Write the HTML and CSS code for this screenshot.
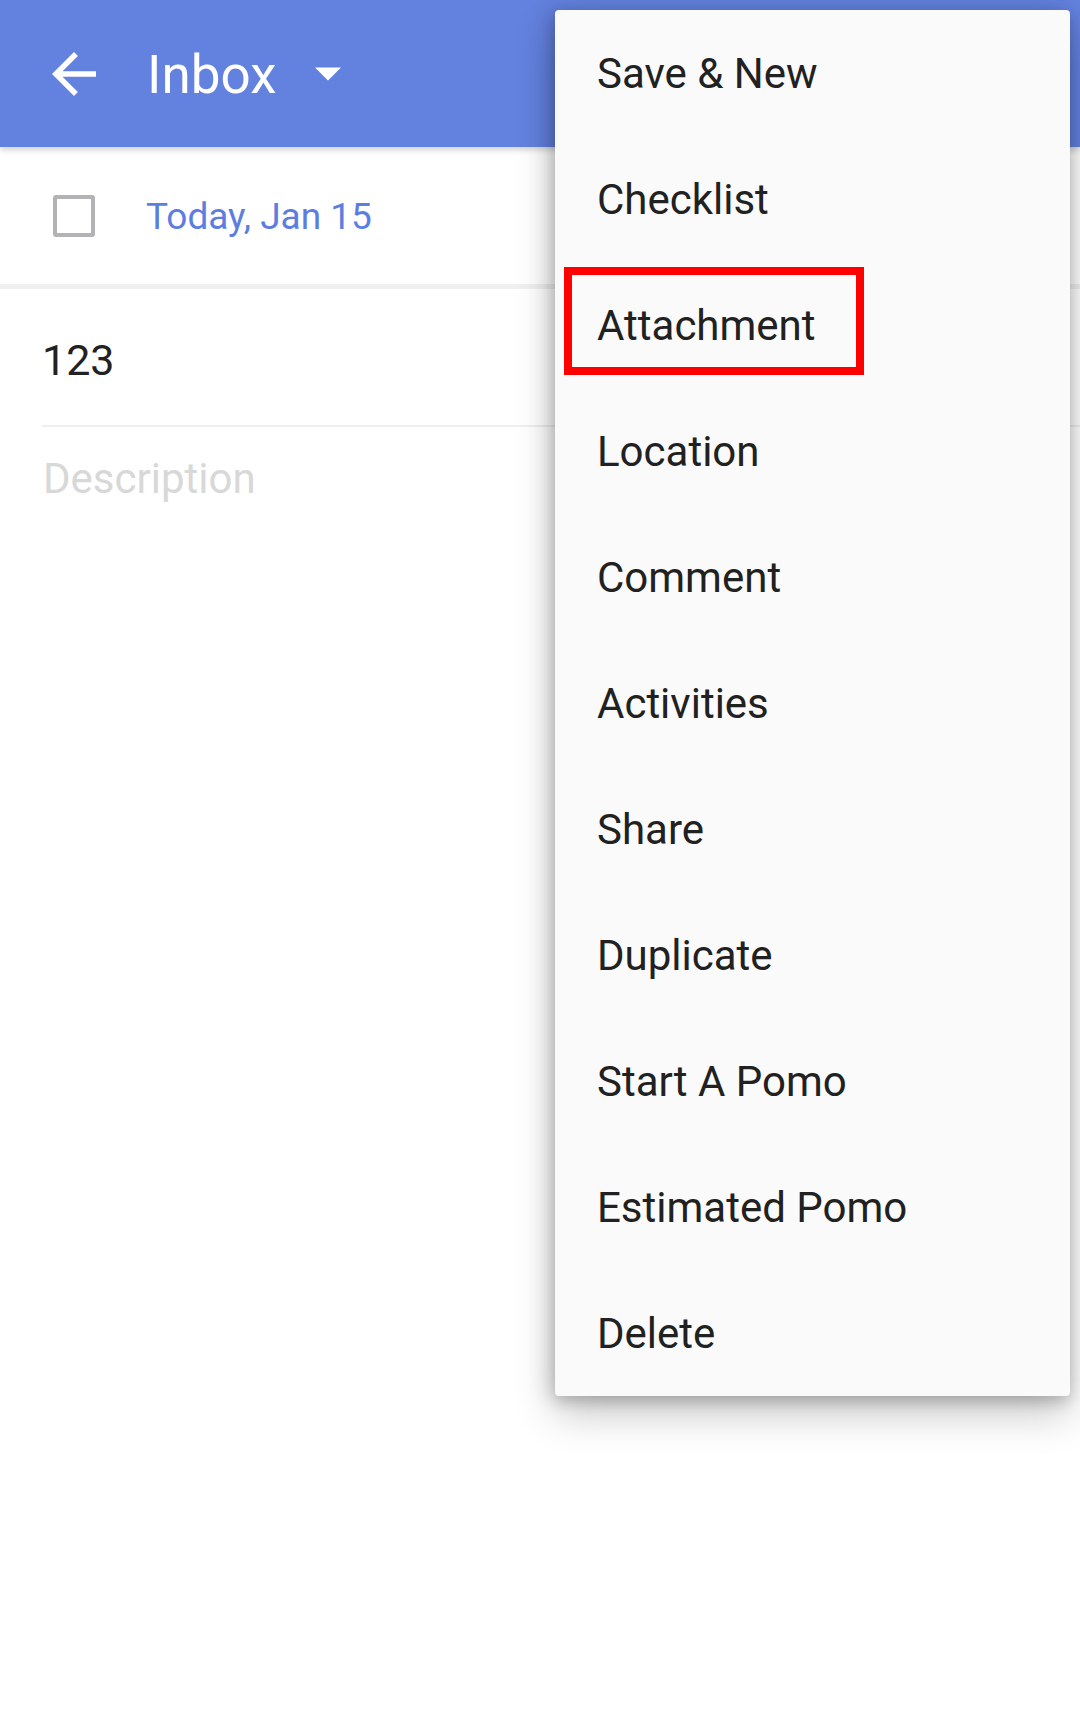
FILE: index.html
```html
<!DOCTYPE html>
<html>
<head>
<meta charset="utf-8">
<link rel="stylesheet" href="styles.css">
</head>
<body>
<div class="screen">
  <header class="appbar">
    <svg class="back" viewBox="0 0 24 24"><path d="M20 11H7.83l5.59-5.59L12 4l-8 8 8 8 1.41-1.41L7.83 13H20v-2z" fill="#fff"/></svg>
    <span class="title">Inbox</span>
    <svg class="drop" viewBox="7 10 10 5"><path d="M7 10l5 5 5-5z" fill="#fff"/></svg>
  </header>
  <div class="daterow">
    <span class="check"></span>
    <span class="date">Today, Jan 15</span>
  </div>
  <div class="sep"></div>
  <div class="content">
    <div class="tasktitle">123</div>
    <div class="desc">Description</div>
  </div>

  <ul class="menu">
    <li class="item">Save &amp; New</li>
    <li class="item">Checklist</li>
    <li class="item marked">Attachment<span class="highlight"></span></li>
    <li class="item">Location</li>
    <li class="item">Comment</li>
    <li class="item">Activities</li>
    <li class="item">Share</li>
    <li class="item">Duplicate</li>
    <li class="item">Start A Pomo</li>
    <li class="item">Estimated Pomo</li>
    <li class="item">Delete</li>
  </ul>
</div>
</body>
</html>
```

FILE: styles.css
```css
* { box-sizing: border-box; }
html, body {
  margin: 0;
  padding: 0;
  background: #ffffff;
}
body {
  font-family: Roboto, "Noto Sans", "Liberation Sans", sans-serif;
}
.screen {
  position: relative;
  width: 1080px;
  height: 1728px;
  overflow: hidden;
  background: #ffffff;
}
.appbar {
  position: relative;
  height: 147px;
  background: #6381de;
  display: flex;
  align-items: center;
  box-shadow: 0 3px 6px rgba(0,0,0,0.18);
  z-index: 1;
}
.back {
  flex: none;
  width: 66px;
  height: 66px;
  margin-left: 41px;
  margin-top: 1px;
}
.title {
  color: #ffffff;
  font-size: 53px;
  margin-left: 40px;
  margin-top: 2px;
}
.drop {
  flex: none;
  width: 26px;
  height: 14px;
  margin-left: 39px;
  margin-top: 0;
}
.daterow {
  height: 137px;
  display: flex;
  align-items: center;
}
.check {
  flex: none;
  width: 42px;
  height: 42px;
  margin-left: 53px;
  border: 4px solid #b3b3b7;
  border-radius: 3px;
}
.date {
  color: #5d7ee0;
  font-size: 37px;
  margin-left: 51px;
  margin-top: 2px;
}
.sep {
  height: 5px;
  background: #f0f0f0;
}
.content {
  padding-left: 43px;
}
.tasktitle {
  font-size: 43px;
  color: #222222;
  height: 138px;
  line-height: 138px;
  border-bottom: 2px solid #efefef;
  padding-top: 2px;
  margin-left: -1px;
}
.desc {
  font-size: 42px;
  color: #d8d8d8;
  margin-top: 27px;
}
.menu {
  position: absolute;
  top: 10px;
  left: 555px;
  width: 515px;
  margin: 0;
  padding: 0;
  list-style: none;
  background: #fafafa;
  border-radius: 4px;
  box-shadow: 0 18px 40px rgba(0,0,0,0.22), 0 6px 14px rgba(0,0,0,0.14), -6px 0 22px rgba(0,0,0,0.12);
  z-index: 2;
}
.item {
  position: relative;
  height: 126px;
  display: flex;
  align-items: center;
  padding-left: 42px;
  font-size: 42px;
  color: #212121;
}
.highlight {
  position: absolute;
  left: 9px;
  top: 5px;
  width: 300px;
  height: 108px;
  border: 8px solid #ff0000;
}
```
